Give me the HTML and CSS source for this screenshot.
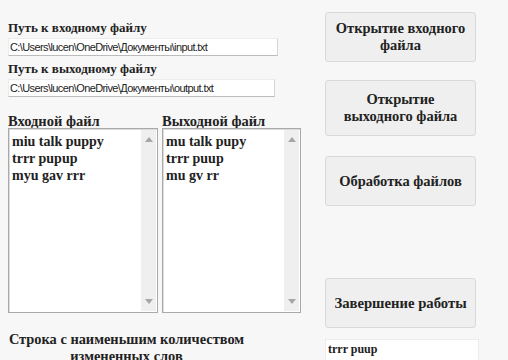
FILE: index.html
```html
<!DOCTYPE html>
<html lang="ru">
<head>
<meta charset="utf-8">
<title>Обработка файлов</title>
<link rel="stylesheet" href="styles.css">
</head>
<body>
<div class="app">
  <div class="left">
    <div class="label first">Путь к входному файлу</div>
    <div class="path in">C:\Users\lucen\OneDrive\Документы\input.txt</div>
    <div class="label">Путь к выходному файлу</div>
    <div class="path out">C:\Users\lucen\OneDrive\Документы\output.txt</div>
    <div class="lists">
      <div class="col">
        <div class="label small">Входной файл</div>
        <div class="listbox w1">
          <div class="lines">
            <div>miu talk puppy</div>
            <div>trrr pupup</div>
            <div>myu gav rrr</div>
          </div>
          <div class="scroll"><span class="up"></span><span class="down"></span></div>
        </div>
      </div>
      <div class="col">
        <div class="label small">Выходной файл</div>
        <div class="listbox w2">
          <div class="lines">
            <div>mu talk pupy</div>
            <div>trrr puup</div>
            <div>mu gv rr</div>
          </div>
          <div class="scroll"><span class="up"></span><span class="down"></span></div>
        </div>
      </div>
    </div>
    <div class="result-label">Строка с наименьшим количеством<br>измененных слов</div>
  </div>
  <div class="right">
    <button class="btn b1">Открытие входного<br>файла</button>
    <button class="btn b2">Открытие<br>выходного файла</button>
    <button class="btn b3">Обработка файлов</button>
    <button class="btn b4">Завершение работы</button>
    <div class="result">trrr puup</div>
  </div>
</div>
</body>
</html>
```
FILE: styles.css
```css
html, body {
  margin: 0;
  padding: 0;
  background: #f7f7f7;
  width: 508px;
  height: 360px;
  overflow: hidden;
}
.app {
  display: flex;
  padding-left: 8px;
  font-family: "Liberation Serif", "DejaVu Serif", serif;
  color: #222;
}
.left {
  width: 293px;
  display: flex;
  flex-direction: column;
}
.label {
  font-weight: bold;
  font-size: 13px;
  line-height: 16px;
  height: 16px;
  margin-top: 5px;
  margin-bottom: 2px;
}
.label.first {
  margin-top: 20px;
}
.path {
  background: #fff;
  border: 1px solid #ececec;
  border-bottom-color: #bcbcbc;
  border-right-color: #d6d6d6;
  height: 16px;
  box-sizing: content-box;
  font-family: "Liberation Sans", Arial, sans-serif;
  font-size: 11px;
  line-height: 16px;
  padding-left: 1px;
  color: #222;
  letter-spacing: -0.6px;
  white-space: nowrap;
}
.path.in { width: 267px; }
.path.out { width: 264px; }
.lists {
  display: flex;
  gap: 4px;
  margin-top: 17px;
}
.col {
  display: flex;
  flex-direction: column;
}
.label.small {
  font-size: 14.5px;
  margin: 0;
  height: 14px;
  line-height: 14px;
}
.listbox {
  display: flex;
  background: #fff;
  border: 1px solid #a9a9a9;
  box-shadow: inset 1px 1px 0 #dcdcdc;
  height: 185px;
  box-sizing: border-box;
}
.listbox.w1 { width: 150px; }
.listbox.w2 { width: 139px; }
.lines {
  flex: 1;
  padding: 4px 0 0 3px;
  font-weight: bold;
  font-size: 14px;
  line-height: 17px;
}
.scroll {
  width: 15px;
  background: #efefef;
  margin: 1px 1px 1px 0;
  display: flex;
  flex-direction: column;
  justify-content: space-between;
  align-items: center;
  padding: 7px 0;
}
.up, .down {
  width: 0;
  height: 0;
  border-left: 4px solid transparent;
  border-right: 4px solid transparent;
}
.up { border-bottom: 5px solid #a6a6a6; }
.down { border-top: 5px solid #a6a6a6; }
.result-label {
  margin-top: 18px;
  width: 237px;
  text-align: center;
  font-weight: bold;
  font-size: 14.4px;
  line-height: 17px;
  white-space: nowrap;
}
.right {
  display: flex;
  flex-direction: column;
  margin-left: 24px;
}
.btn {
  width: 151px;
  height: 50px;
  background: #efefef;
  border: 1px solid #d9d9d9;
  border-radius: 3px;
  font-family: "Liberation Serif", "DejaVu Serif", serif;
  font-weight: bold;
  font-size: 14.5px;
  line-height: 17px;
  color: #222;
  padding: 0;
}
.b1 { margin-top: 12px; }
.b2 { margin-top: 18px; height: 56px; }
.b3 { margin-top: 20px; }
.b4 { margin-top: 72px; font-size: 14.7px; }
.result {
  margin-top: 11px;
  width: 150px;
  height: 20px;
  background: #fff;
  border: 1px solid #ececec;
  border-bottom-color: #bcbcbc;
  font-weight: bold;
  font-size: 12px;
  line-height: 18px;
  padding-left: 2px;
}
```
